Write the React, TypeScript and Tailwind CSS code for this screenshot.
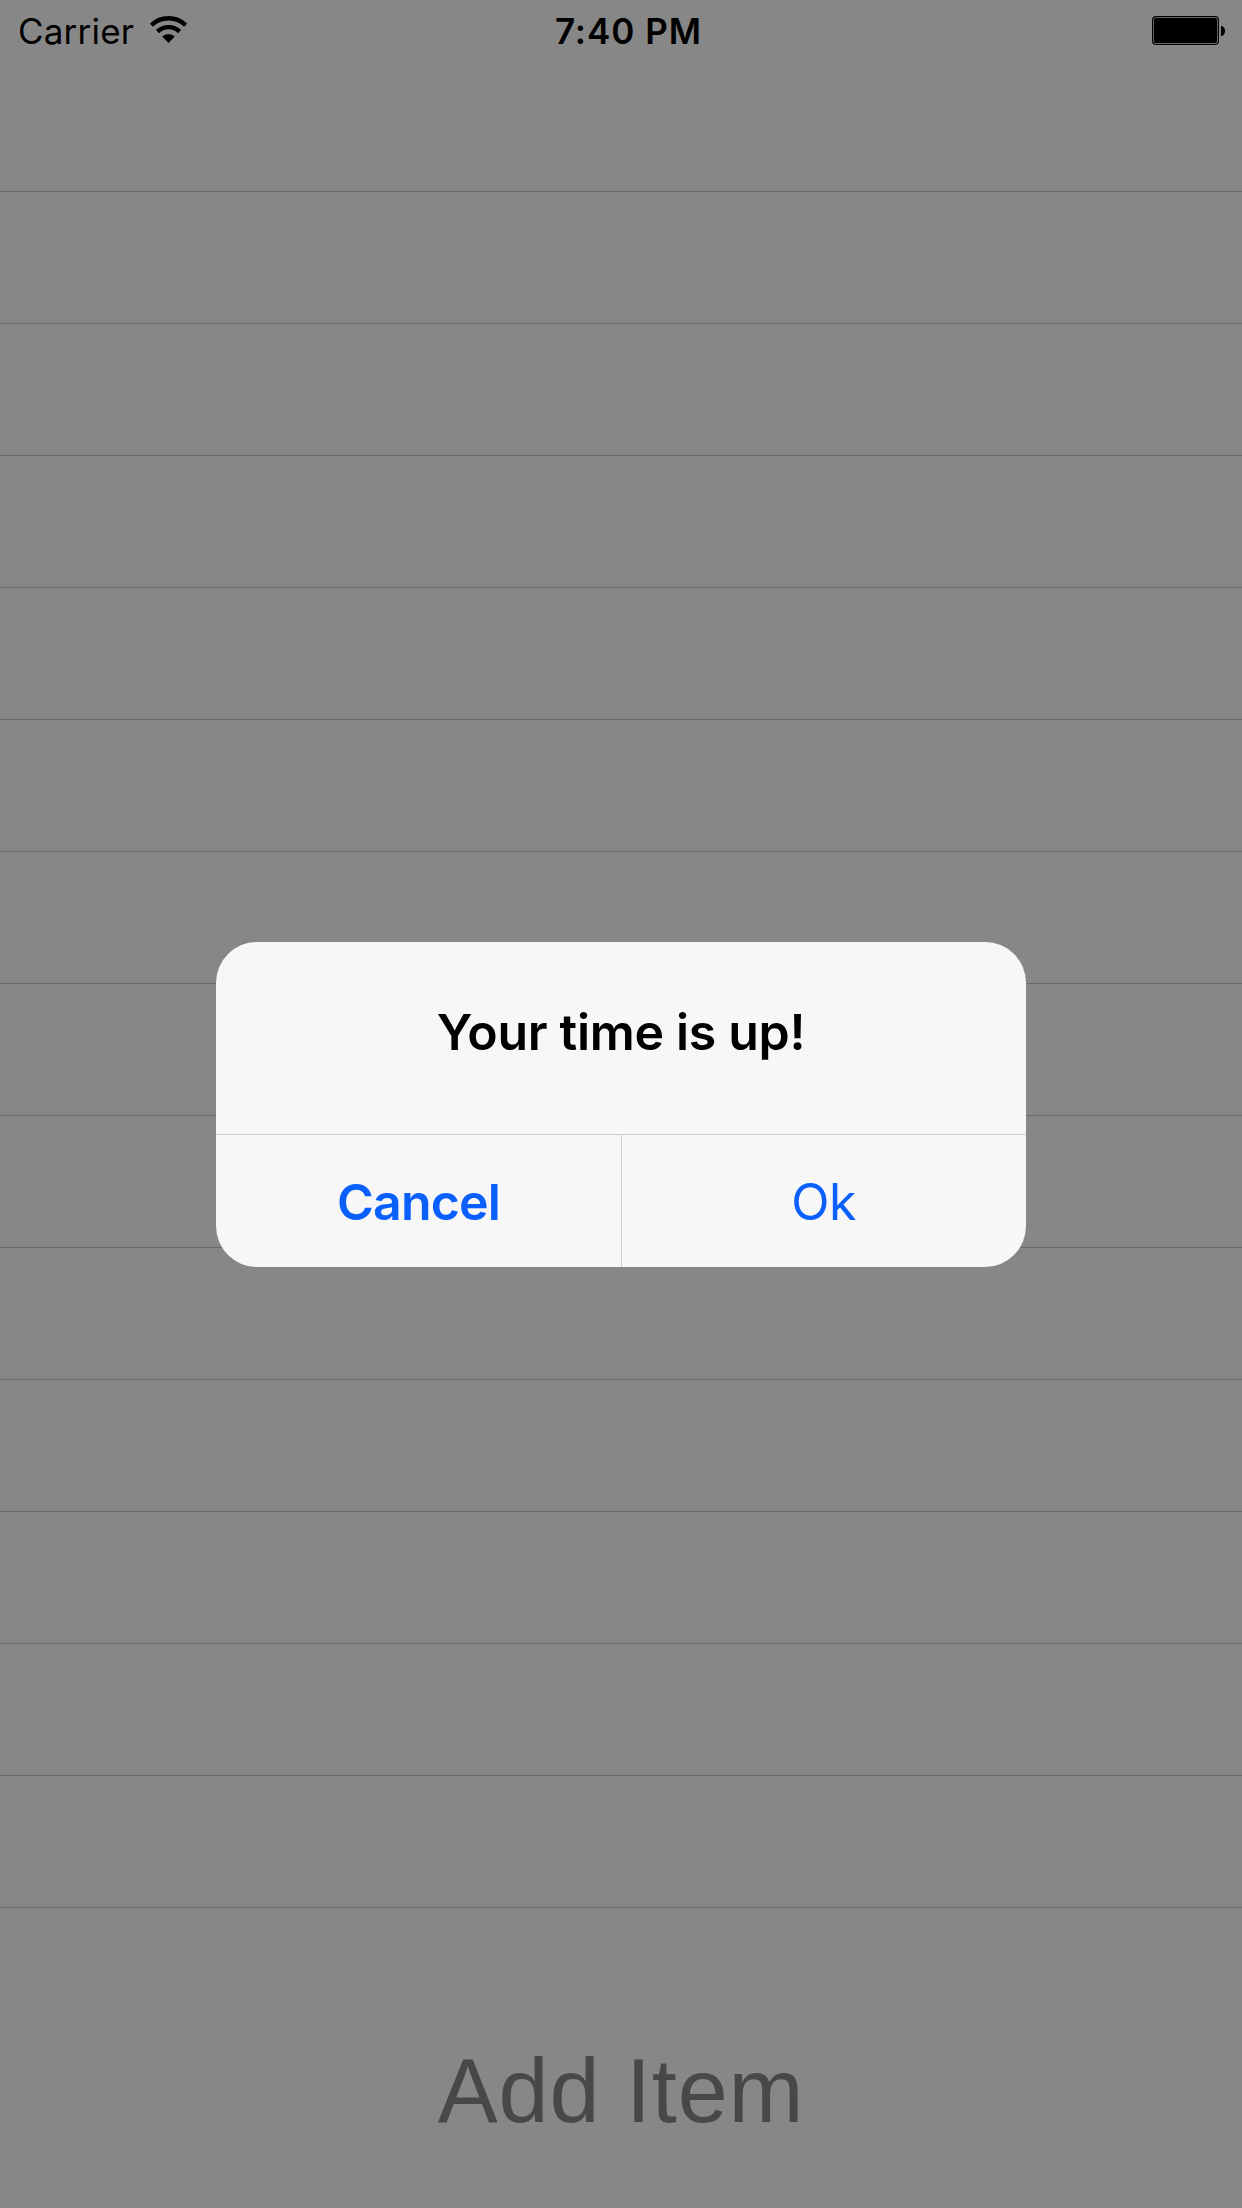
import React from 'react';

const rows = Array.from({ length: 14 }, (_, i) => i);

function StatusBar() {
  return (
    <header className="grid h-[60px] grid-cols-3 items-start pl-[18px] pr-[16px] text-[35px] leading-[63px]">
      <div className="flex items-start">
        <span className="w-[132px] tracking-[0.2px]">Carrier</span>
        <svg className="mt-[16px]" width="37" height="28" viewBox="0 0 37 28" fill="none" stroke="#000" strokeWidth="4.4">
          <path d="M1.3 9.2A24.7 24.7 0 0 1 35.7 9.2" />
          <path d="M7.5 15.6A15.8 15.8 0 0 1 29.5 15.6" />
          <path d="M18.5 27L12.2 20.5A9 9 0 0 1 24.8 20.5Z" fill="#000" stroke="none" />
        </svg>
      </div>
      <span className="pl-[13px] text-center font-semibold tracking-[1px]">7:40 PM</span>
      <svg className="mt-[16px] justify-self-end" width="74" height="29" viewBox="0 0 74 29">
        <rect x="0.6" y="0.6" width="65.8" height="27.8" rx="3.5" fill="none" stroke="#000" strokeWidth="1.2" />
        <rect x="1.9" y="1.9" width="63.2" height="25.2" rx="2" />
        <path d="M69 10C74.3 10 74.3 20 69 20Z" />
      </svg>
    </header>
  );
}

export default function App() {
  return (
    <main className="relative flex h-[2208px] w-[1242px] flex-col overflow-hidden bg-[#878787] font-['Inter',sans-serif] text-black">
      <StatusBar />
      {rows.map((row) => (
        <div key={row} className="h-[132px] border-b border-[#6a6a6b]" />
      ))}
      <div className="flex flex-1 items-center justify-center pt-[67px] font-['Liberation_Sans',sans-serif] text-[90px] tracking-[0.8px] text-[#484848]">Add Item</div>
      <section role="alertdialog" className="absolute left-[216px] top-[942px] flex h-[325px] w-[810px] flex-col overflow-hidden rounded-[41px] bg-[#f7f7f7]">
        <h1 className="flex h-[192px] items-center justify-center pb-[11px] text-[50px] font-semibold tracking-[-0.3px]">Your time is up!</h1>
        <div className="grid flex-1 grid-cols-2 border-t border-[#d0d0d4] text-[50px] text-[#0a60ff]">
          <button className="pt-[2px] font-semibold tracking-[-0.8px]">Cancel</button>
          <button className="border-l border-[#d0d0d4] pt-[2px] pr-[1px] tracking-[-0.6px]">Ok</button>
        </div>
      </section>
    </main>
  );
}
